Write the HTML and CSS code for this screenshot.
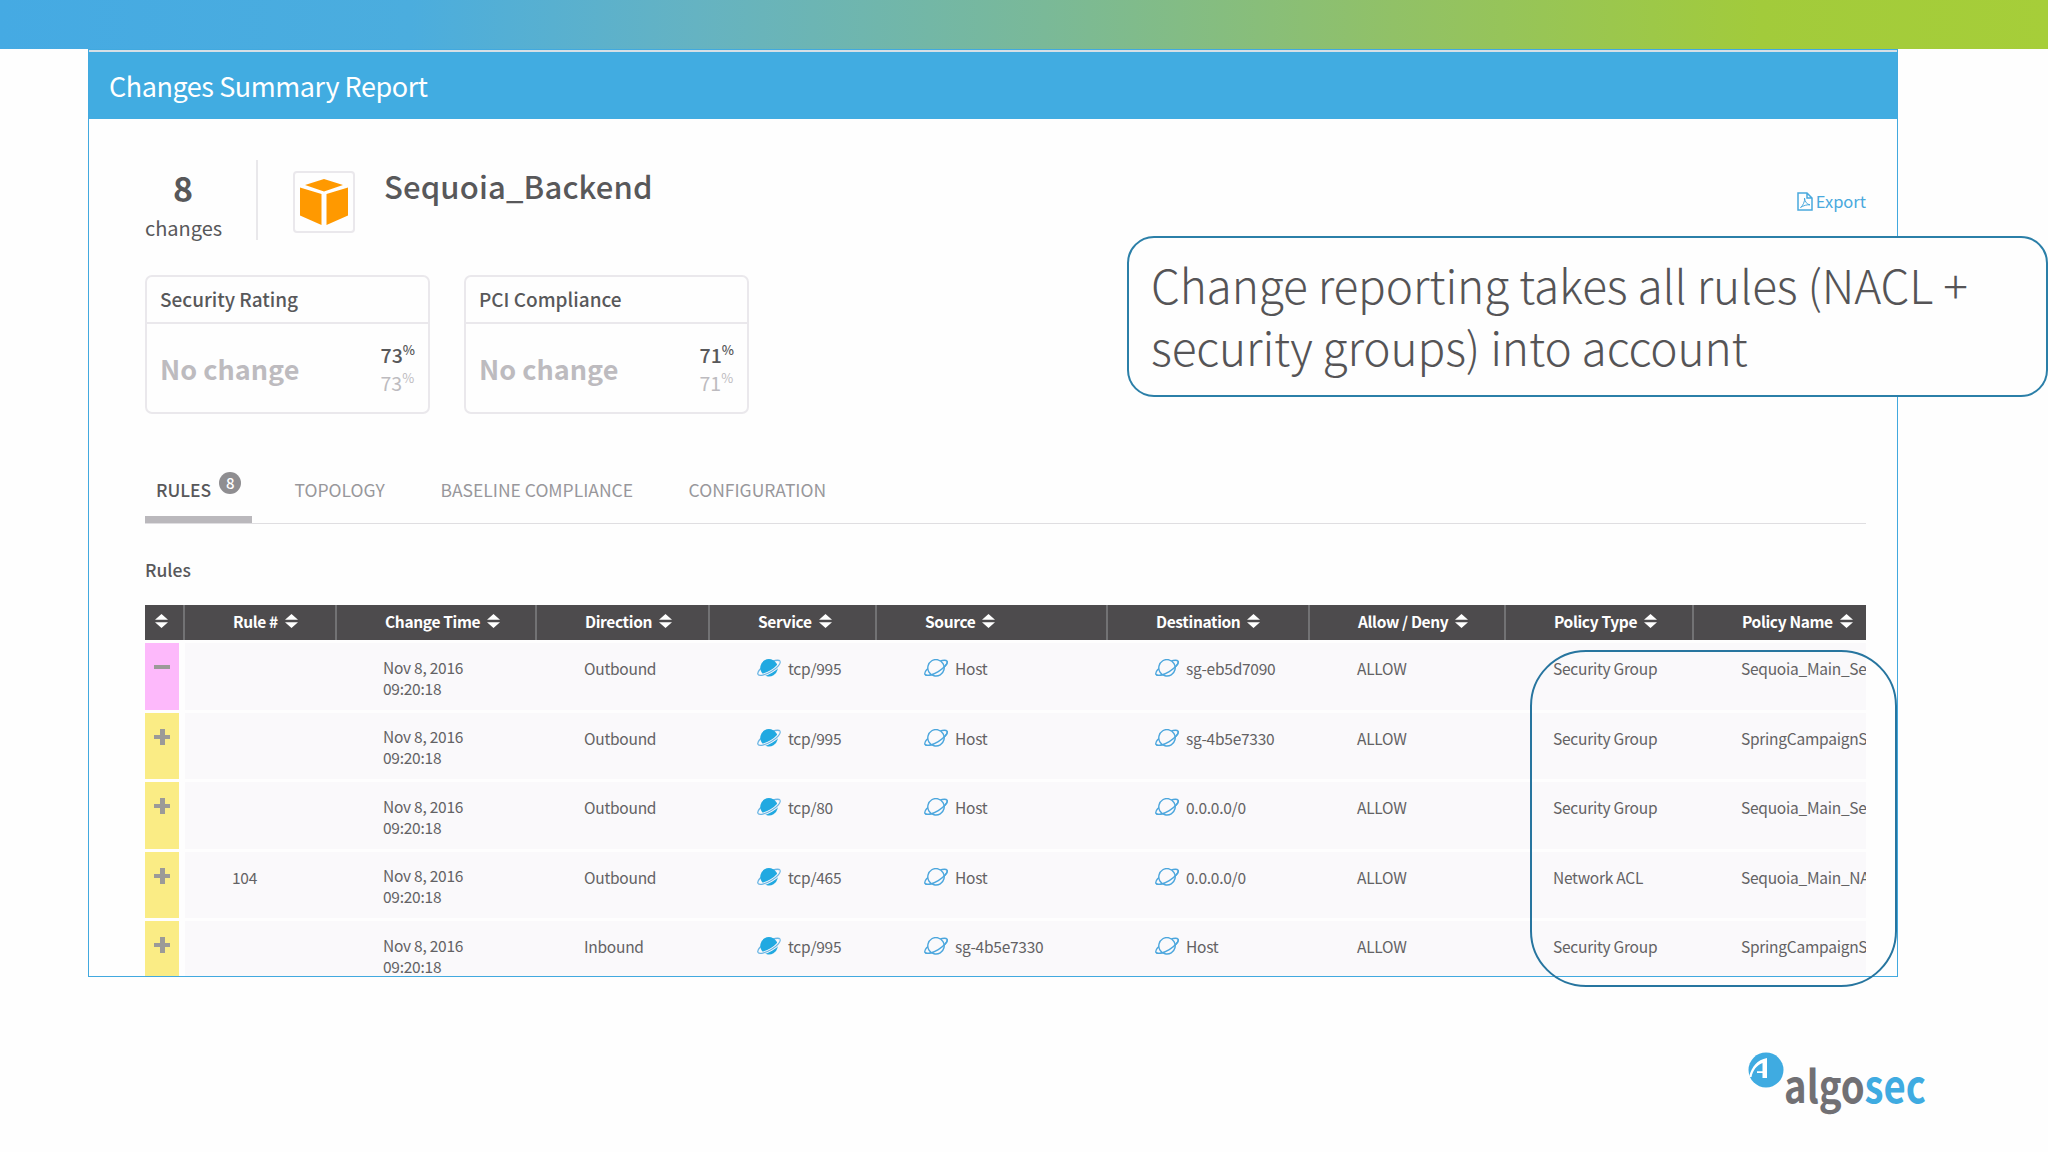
FILE: index.html
```
<!DOCTYPE html>
<html lang="en">

<head>
    <meta charset="UTF-8">
    <meta name="viewport" content="width=device-width, initial-scale=1.0">
    <title>Changes Summary Report</title>
    <link rel="stylesheet" href="styles.css">
</head>

<body>
    <!-- shared icons -->
    <svg class="defs" width="0" height="0">
        <symbol id="sort" viewBox="0 0 13 14">
            <path d="M6.5 0 13 5.8H0zM0 8.2h13L6.5 14z" fill="#fff" />
        </symbol>
        <symbol id="planet-full" viewBox="0 0 24 18">
            <g transform="rotate(-31 12 8.8)" fill="none">
                <ellipse cx="12" cy="8.800" rx="12.800" ry="4.400" stroke="#6bb6e4" stroke-width="1.400" />
                <circle cx="12" cy="8.800" r="8.700" fill="#21a9e1" />
                <path d="M-.8 8.800a12.800 4.400 0 0 0 25.600 0" stroke="#faf9fb" stroke-width="3" />
                <path d="M-.8 8.800a12.800 4.400 0 0 0 25.600 0" stroke="#6bb6e4" stroke-width="1.200" />
            </g>
        </symbol>
        <symbol id="planet" viewBox="0 0 24 18">
            <g transform="rotate(-31 12 8.8)" fill="none" stroke="#4ba6dd" stroke-width="1.400">
                <ellipse cx="12" cy="8.800" rx="12.800" ry="4.400" />
                <circle cx="12" cy="8.800" r="8.200" fill="#faf9fb" />
                <path d="M-.8 8.800a12.800 4.400 0 0 0 25.600 0" />
            </g>
        </symbol>
    </svg>

    <div class="top-bar"></div>

    <div class="report">
        <div class="report-header">Changes Summary Report</div>

        <div class="report-body">
            <div class="summary">
                <div class="count">
                    <div class="count-number">8</div>
                    <div class="count-label">changes</div>
                </div>
                <div class="device-icon">
                    <svg width="48" height="46" viewBox="0 0 48 46">
                        <path d="M24 0 43 6 24 12.500 5 6zM0 8.500 21.500 15v31L0 36.500zM48 8.500 26.500 15v31L48 36.500z" fill="#ff9900" />
                    </svg>
                </div>
                <h1 class="device-name">Sequoia_Backend</h1>
                <a class="export">
                    <svg width="16" height="19" viewBox="0 0 16 19">
                        <path d="M1 1h9l5 5v12H1zM10 1v5h5" fill="none" stroke="#4aa9dd" stroke-width="1.500" />
                        <path d="M3.500 15.500C6 13.500 8 9.500 7.500 6c.5 4 2.500 6.500 5.500 6.800-3-.3-6.500.7-9.500 2.700z" fill="none" stroke="#4aa9dd" />
                    </svg>
                    <span>Export</span>
                </a>
            </div>

            <div class="cards">
                <div class="card">
                    <div class="card-title">Security Rating</div>
                    <div class="card-content">
                        <div class="card-status">No change</div>
                        <div class="card-values">
                            <div class="current">73<span class="pct">%</span></div>
                            <div class="previous">73<span class="pct">%</span></div>
                        </div>
                    </div>
                </div>
                <div class="card">
                    <div class="card-title">PCI Compliance</div>
                    <div class="card-content">
                        <div class="card-status">No change</div>
                        <div class="card-values">
                            <div class="current">71<span class="pct">%</span></div>
                            <div class="previous">71<span class="pct">%</span></div>
                        </div>
                    </div>
                </div>
            </div>

            <div class="tabs">
                <div class="tab active">RULES<span class="badge">8</span></div>
                <div class="tab">TOPOLOGY</div>
                <div class="tab">BASELINE COMPLIANCE</div>
                <div class="tab">CONFIGURATION</div>
            </div>

            <h2 class="section-title">Rules</h2>

            <div class="table-wrap">
                <table class="rules">
                    <colgroup>
                        <col class="c-mark">
                        <col class="c-rule">
                        <col class="c-time">
                        <col class="c-dir">
                        <col class="c-service">
                        <col class="c-source">
                        <col class="c-dest">
                        <col class="c-allow">
                        <col class="c-type">
                        <col class="c-name">
                    </colgroup>
                    <thead>
                        <tr>
                            <th class="mark-head"><svg class="sort"><use href="#sort" /></svg></th>
                            <th>Rule #<svg class="sort"><use href="#sort" /></svg></th>
                            <th>Change Time<svg class="sort"><use href="#sort" /></svg></th>
                            <th>Direction<svg class="sort"><use href="#sort" /></svg></th>
                            <th>Service<svg class="sort"><use href="#sort" /></svg></th>
                            <th>Source<svg class="sort"><use href="#sort" /></svg></th>
                            <th>Destination<svg class="sort"><use href="#sort" /></svg></th>
                            <th>Allow / Deny<svg class="sort"><use href="#sort" /></svg></th>
                            <th>Policy Type<svg class="sort"><use href="#sort" /></svg></th>
                            <th>Policy Name<svg class="sort"><use href="#sort" /></svg></th>
                        </tr>
                    </thead>
                    <tbody>
                        <tr>
                            <td class="mark removed"><i class="sign"></i></td>
                            <td></td>
                            <td class="time">Nov 8, 2016<br>09:20:18</td>
                            <td>Outbound</td>
                            <td><svg class="planet"><use href="#planet-full" /></svg>tcp/995</td>
                            <td><svg class="planet"><use href="#planet" /></svg>Host</td>
                            <td><svg class="planet"><use href="#planet" /></svg>sg-eb5d7090</td>
                            <td>ALLOW</td>
                            <td>Security Group</td>
                            <td>Sequoia_Main_Se</td>
                        </tr>
                        <tr>
                            <td class="mark added"><i class="sign"></i></td>
                            <td></td>
                            <td class="time">Nov 8, 2016<br>09:20:18</td>
                            <td>Outbound</td>
                            <td><svg class="planet"><use href="#planet-full" /></svg>tcp/995</td>
                            <td><svg class="planet"><use href="#planet" /></svg>Host</td>
                            <td><svg class="planet"><use href="#planet" /></svg>sg-4b5e7330</td>
                            <td>ALLOW</td>
                            <td>Security Group</td>
                            <td>SpringCampaignS</td>
                        </tr>
                        <tr>
                            <td class="mark added"><i class="sign"></i></td>
                            <td></td>
                            <td class="time">Nov 8, 2016<br>09:20:18</td>
                            <td>Outbound</td>
                            <td><svg class="planet"><use href="#planet-full" /></svg>tcp/80</td>
                            <td><svg class="planet"><use href="#planet" /></svg>Host</td>
                            <td><svg class="planet"><use href="#planet" /></svg>0.0.0.0/0</td>
                            <td>ALLOW</td>
                            <td>Security Group</td>
                            <td>Sequoia_Main_Se</td>
                        </tr>
                        <tr>
                            <td class="mark added"><i class="sign"></i></td>
                            <td>104</td>
                            <td class="time">Nov 8, 2016<br>09:20:18</td>
                            <td>Outbound</td>
                            <td><svg class="planet"><use href="#planet-full" /></svg>tcp/465</td>
                            <td><svg class="planet"><use href="#planet" /></svg>Host</td>
                            <td><svg class="planet"><use href="#planet" /></svg>0.0.0.0/0</td>
                            <td>ALLOW</td>
                            <td>Network ACL</td>
                            <td>Sequoia_Main_NA</td>
                        </tr>
                        <tr>
                            <td class="mark added"><i class="sign"></i></td>
                            <td></td>
                            <td class="time">Nov 8, 2016<br>09:20:18</td>
                            <td>Inbound</td>
                            <td><svg class="planet"><use href="#planet-full" /></svg>tcp/995</td>
                            <td><svg class="planet"><use href="#planet" /></svg>sg-4b5e7330</td>
                            <td><svg class="planet"><use href="#planet" /></svg>Host</td>
                            <td>ALLOW</td>
                            <td>Security Group</td>
                            <td>SpringCampaignS</td>
                        </tr>
                    </tbody>
                </table>
            </div>
        </div>
    </div>

    <div class="callout">Change reporting takes all rules (NACL +<br>security groups) into account</div>
    <div class="highlight"></div>

    <div class="footer">
        <svg width="190" height="70" viewBox="0 0 190 70">
            <circle cx="26" cy="20" r="17.500" fill="#3fabe1" />
            <path d="M9 27C12 16 17 10 27 8v20h-4.500v-5H17v-1.800h5.500V13C16.500 15.500 13 20 11.500 27z" fill="#fff" />
            <text class="logo-text" x="44" y="53" textLength="142" lengthAdjust="spacingAndGlyphs"><tspan fill="#717074">algo</tspan><tspan fill="#3fabe1">sec</tspan></text>
        </svg>
    </div>
</body>

</html>
```
FILE: styles.css
```
* {
    box-sizing: border-box;
}

body {
    margin: 0;
    width: 2048px;
    height: 1152px;
    overflow: hidden;
    position: relative;
    background-color: #fefefe;
    font-family: "Noto Sans CJK SC", "Noto Sans", sans-serif;
    color: #58585a;
}

.defs {
    display: block;
    position: absolute;
}

.top-bar {
    height: 49px;
    background: linear-gradient(to right, #45aae3 0%, #4badde 20%, #65b3c2 34%, #7ab998 51%, #91c167 68%, #a2cb3b 86%, #a6ce39 100%);
}

.report {
    width: 1810px;
    height: 928px;
    margin-left: 88px;
    border: 1px solid #42a9df;
    background-color: #fefefe;
    overflow: hidden;
}

.report-header {
    height: 69px;
    padding-left: 20px;
    border-top: 2px solid #d5dfe6;
    background-color: #41ace1;
    color: #fff;
    font-size: 27px;
    letter-spacing: -0.45px;
    line-height: 68px;
}

.report-body {
    padding: 41px 31px 0 56px;
}

/* summary line */
.summary {
    display: flex;
    height: 115px;
}

.count {
    width: 113px;
    height: 80px;
    padding-right: 35px;
    border-right: 2px solid #e9e8eb;
    text-align: center;
}

.count-number {
    font-size: 34px;
    font-weight: 700;
    line-height: 56px;
}

.count-label {
    font-size: 20px;
    line-height: 24px;
}

.device-icon {
    display: flex;
    align-items: center;
    justify-content: center;
    width: 62px;
    height: 62px;
    margin: 11px 0 0 35px;
    border: 2px solid #eae8ec;
    border-radius: 4px;
}

.device-name {
    margin: 4px 0 0 29px;
    font-size: 31px;
    font-weight: 500;
    letter-spacing: 0.15px;
    line-height: 44px;
}

.export {
    display: flex;
    gap: 3px;
    height: 20px;
    margin: 32px 0 0 auto;
    color: #4aa9dd;
    font-size: 16.5px;
    line-height: 19px;
}

/* rating cards */
.cards {
    display: flex;
    gap: 34px;
}

.card {
    width: 285px;
    height: 139px;
    border: 2px solid #eae8ec;
    border-radius: 7px;
}

.card-title {
    height: 47px;
    padding-left: 13px;
    border-bottom: 2px solid #eae8ec;
    font-size: 19px;
    font-weight: 500;
    line-height: 44px;
}

.card-content {
    display: flex;
    justify-content: space-between;
    padding: 17px 13px 0 13px;
}

.card-status {
    color: #bdbbbf;
    font-size: 27px;
    font-weight: 700;
    line-height: 56px;
}

.card-values {
    font-size: 19.5px;
    line-height: 28px;
}

.current {
    font-weight: 500;
}

.previous {
    color: #bdbbbf;
}

.pct {
    font-size: 13px;
    line-height: 0;
    vertical-align: 8px;
}

/* tabs */
.tabs {
    display: flex;
    gap: 55.5px;
    height: 49px;
    margin-top: 61px;
    border-bottom: 1px solid #dfdee1;
}

.tab {
    display: flex;
    height: 48px;
    color: #98979b;
    font-size: 17.5px;
    line-height: 29px;
}

.tab.active {
    width: 107px;
    margin-right: -13px;
    padding-left: 11px;
    border-bottom: 7px solid #bab8bc;
    color: #58585a;
    font-weight: 500;
}

.badge {
    width: 22px;
    height: 22px;
    margin: -3px 0 0 8px;
    border-radius: 50%;
    background-color: #8f8e91;
    color: #fff;
    font-size: 15px;
    line-height: 21px;
    text-align: center;
}

.section-title {
    margin: 30px 0 19px;
    font-size: 17.5px;
    font-weight: 500;
    line-height: 32px;
}

/* rules table */
.table-wrap {
    width: 1721px;
    overflow: hidden;
}

.rules {
    width: 1900px;
    table-layout: fixed;
    border-collapse: separate;
    border-spacing: 0;
    font-size: 15.5px;
    letter-spacing: -0.25px;
    line-height: 21px;
}

.c-mark { width: 40px; }
.c-rule { width: 152px; }
.c-time { width: 200px; }
.c-dir { width: 173px; }
.c-service { width: 167px; }
.c-source { width: 231px; }
.c-dest { width: 202px; }
.c-allow { width: 196px; }
.c-type { width: 188px; }

.rules th {
    height: 35px;
    padding: 0 0 3px 48px;
    border-right: 2px solid #727274;
    background-color: #4d4b4d;
    color: #fff;
    font-weight: 700;
    letter-spacing: -0.35px;
    text-align: left;
    white-space: nowrap;
}

.rules .mark-head {
    padding-left: 10px;
}

.sort {
    width: 13px;
    height: 14px;
    margin-left: 7px;
}

.mark-head .sort {
    margin-left: 0;
}

.rules td {
    height: 69.6px;
    padding: 15px 0 0 47px;
    border-top: 3px solid #fefefe;
    background-color: #faf9fb;
    color: #636264;
    vertical-align: top;
    white-space: nowrap;
}

.rules .time {
    padding: 13.5px 0 0 46px;
}

.rules .mark {
    padding: 16px 0 0 9px;
    border-right: 6px solid #fefefe;
}

.rules .removed {
    background-color: #fdb9fb;
}

.rules .added {
    background-color: #faec85;
}

.sign {
    display: block;
    width: 16px;
    height: 16px;
    background: linear-gradient(#9b9a98, #9b9a98) center / 16px 4px no-repeat;
}

.added .sign {
    background: linear-gradient(#9b9a98, #9b9a98) center / 16px 4px no-repeat, linear-gradient(#9b9a98, #9b9a98) center / 5px 16px no-repeat;
}

.planet {
    width: 24px;
    height: 18px;
    margin-right: 7px;
    overflow: visible;
    vertical-align: -2px;
}

/* annotations over the report */
.callout {
    position: absolute;
    left: 1127px;
    top: 236px;
    width: 921px;
    height: 161px;
    padding: 15px 0 0 22px;
    border: 2px solid #2b7fa8;
    border-radius: 27px;
    background-color: #fefefe;
    color: #555456;
    font-size: 46px;
    font-weight: 300;
    letter-spacing: -0.14px;
    line-height: 62px;
    white-space: nowrap;
}

.highlight {
    position: absolute;
    left: 1530px;
    top: 650px;
    width: 367px;
    height: 337px;
    border: 2px solid #27759f;
    border-radius: 56px;
}

.footer {
    display: flex;
    justify-content: flex-end;
    padding: 73px 118px 0 0;
}

.logo-text {
    font-family: "Noto Sans CJK SC", sans-serif;
    font-size: 45px;
    font-weight: 700;
}
```
